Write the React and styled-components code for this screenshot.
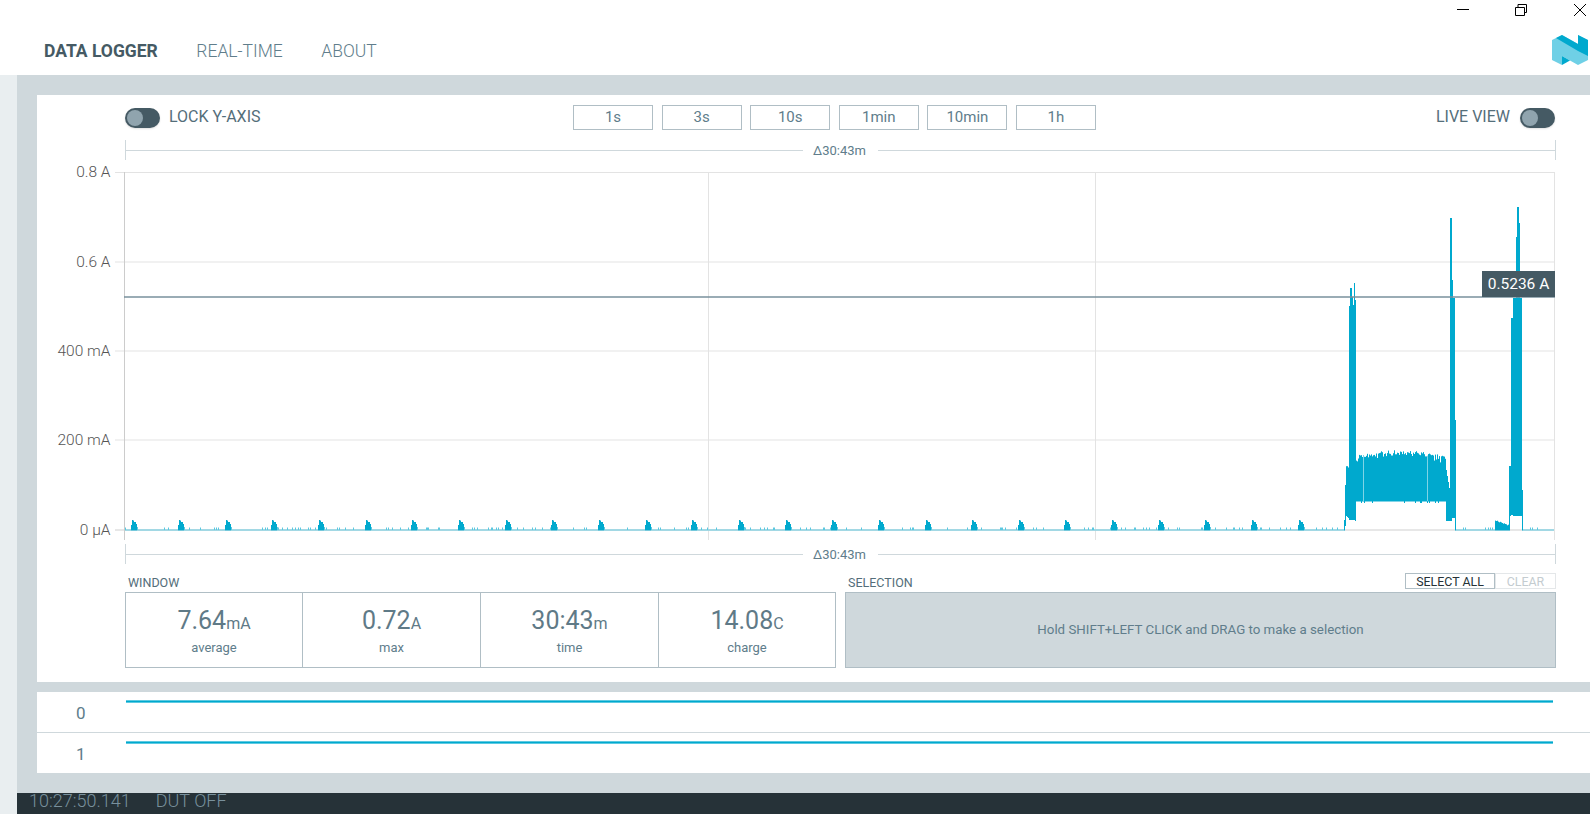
import React from 'react';
import styled, { createGlobalStyle } from 'styled-components';

const Global = createGlobalStyle`
  html, body { margin: 0; padding: 0; background: #fff; }
  body { font-family: Roboto, "Liberation Sans", sans-serif; overflow: hidden; }
  * { box-sizing: border-box; }
`;

const Page = styled.div`
  width: 1590px; height: 814px; display: flex; flex-direction: column; overflow: hidden; background: #fff;
`;
const Header = styled.header`
  height: 75px; flex: none; display: flex; flex-direction: column; background: #fff;
`;
const TitleBar = styled.div`
  height: 25px; display: flex; justify-content: flex-end; align-items: flex-start;
`;
const WinIcon = styled.svg`
  width: 14px; height: 18px; margin-right: ${p => p.$mr}px; display: block;
`;
const NavRow = styled.nav`
  height: 50px; display: flex; align-items: center; padding: 0 2px 0 44px;
`;
const NavItem = styled.span`
  font-size: 17.5px; padding-top: 1px; margin-right: 38.5px; color: ${p => p.$active ? '#455a64' : '#607d8b'}; font-weight: ${p => p.$active ? 700 : 300};
`;
const Logo = styled.svg`
  width: 36px; height: 30px; margin-left: auto; display: block;
`;
const Body = styled.div`
  flex: 1; min-height: 0; display: flex;
`;
const Strip = styled.div`
  width: 17px; flex: none; background: #e9eef0;
`;
const Main = styled.main`
  flex: 1; min-width: 0; display: flex; flex-direction: column; background: #cfd8dc;
`;
const Content = styled.div`
  flex: 1; padding: 20px 0 0 20px; display: flex; flex-direction: column; gap: 10px;
`;
const ChartCard = styled.section`
  height: 587px; background: #fff; padding: 10px 34px 0 88px; display: flex; flex-direction: column;
`;
const Toolbar = styled.div`
  height: 25px; display: grid; grid-template-columns: 448px auto 1fr; align-items: center;
`;
const Toggles = styled.div`
  display: flex; align-items: center; gap: ${p => p.$gap}px; justify-content: ${p => p.$end ? 'flex-end' : 'flex-start'}; padding-right: ${p => p.$end ? 1 : 0}px;
`;
const ToggleLabel = styled.span`
  font-size: 16px; padding-bottom: 2px; color: #546e7a; font-weight: 400;
`;
const Switch = styled.span`
  width: 35px; height: 20px; border-radius: 10px; background: #455a64; display: flex; align-items: center; padding-left: 2px; box-shadow: 0 1px 2px rgba(0,0,0,.12);
`;
const Knob = styled.span`
  width: 16px; height: 16px; border-radius: 50%; background: #90a4ae;
`;
const RangeGroup = styled.div`
  display: flex; gap: 8.6px;
`;
const RangeButton = styled.button`
  width: 80px; height: 25px; padding: 0 0 2px; background: #fff; border: 1px solid #b0bec5; border-radius: 0; color: #607d8b; font: 400 15px Roboto, sans-serif;
`;
const Ruler = styled.div`
  height: 20px; flex: none; margin-top: ${p => p.$mt}px; padding-top: 2px; border-left: 1px solid #cfd8dc; border-right: 1px solid #cfd8dc; display: flex; align-items: center; justify-content: center; position: relative;
  &::before { content: ''; position: absolute; left: 0; right: 0; top: 10px; height: 1px; background: #cfd8dc; }
`;
const RulerLabel = styled.span`
  position: relative; background: #fff; padding: 0 12px 0 10px; font-size: 13px; line-height: 16px; color: #607d8b;
`;
const ChartSvg = styled.svg`
  display: block; flex: none; width: 1518px; height: 384px; margin-left: -88px;
`;
const StatsRow = styled.div`
  display: grid; grid-template-columns: 711px 711px; column-gap: 9px;
`;
const Section = styled.div`
  display: flex; flex-direction: column;
`;
const SectionHead = styled.div`
  height: 28px; display: flex; align-items: flex-end; justify-content: space-between;
`;
const SectionTitle = styled.span`
  font-size: 12.5px; line-height: 14px; padding: 0 0 2px 3px; color: #546e7a;
`;
const HeadButtons = styled.div`
  display: flex; margin-bottom: 3px;
`;
const SmallButton = styled.button`
  height: 16px; width: ${p => p.$w}px; padding: 0; background: #fff; border-radius: 0; font: 400 12.4px Roboto, sans-serif;
  border: 1px solid ${p => p.$off ? '#e4e7e9' : '#b0bec5'}; color: ${p => p.$off ? '#c4ccd0' : '#263238'};
`;
const StatBox = styled.div`
  height: 76px; display: grid; grid-template-columns: 176px 178px 178px 1fr; border: 1px solid #b0bec5;
`;
const StatCell = styled.div`
  display: flex; flex-direction: column; align-items: center; padding-top: 12px; border-left: ${p => p.$first ? 'none' : '1px solid #b0bec5'};
`;
const StatValue = styled.div`
  font-size: 25px; line-height: 32px; color: #5f7a87; font-weight: 400; display: flex; align-items: baseline;
`;
const StatUnit = styled.span`
  font-size: 16px; font-weight: 400;
`;
const StatName = styled.div`
  font-size: 13px; line-height: 16px; color: #607d8b;
`;
const SelectionBox = styled.div`
  height: 76px; background: #cfd8dc; border: 1px solid #b0bec5; padding-bottom: 2px; display: flex; align-items: center; justify-content: center; font-size: 13.3px; color: #607d8b;
`;
const DigitalCard = styled.section`
  height: 81px; background: #fff; display: flex; flex-direction: column;
`;
const DigitalRow = styled.div`
  height: ${p => p.$first ? 40 : 41}px; display: flex; border-top: ${p => p.$first ? 'none' : '1px solid #cfd8dc'};
`;
const ChannelName = styled.span`
  width: 89px; flex: none; padding: 10px 0 0 39px; font-size: 17px; line-height: 22px; color: #607d8b;
`;
const ChannelLine = styled.div`
  width: 1427px; height: 3px; margin-top: 8px; background: linear-gradient(#9fe0ee, #00a9ce 40%, #00a9ce 60%, #9fe0ee);
`;
const StatusBar = styled.footer`
  height: 21px; flex: none; background: #263238; display: flex; gap: 25px; padding-left: 12px; color: #78909c; font-size: 18px; font-weight: 300; line-height: 15px;
`;

function rng(seed) {
  let s = seed;
  return () => { s = (s * 16807) % 2147483647; return s / 2147483647; };
}

function buildColumns() {
  const r = rng(4711);
  const cols = [];
  const blips = Array.from({ length: 26 }, (_, i) => 131 + i * 46.65);
  for (let x = 125; x <= 1553; x++) {
    let top = r() < 0.12 ? 527.5 : 529.5;
    let bot = 530.5;
    const b = blips.find(v => x >= v && x < v + 7);
    if (b !== undefined && x < 1340) {
      const d = Math.floor(x - b);
      top = [525, 520, 520.5, 522, 522, 524, 527][d];
    }
    if (x === 1344) { top = 520; }
    else if (x === 1345) { top = 485; bot = 526; }
    else if (x >= 1346 && x <= 1348) { top = 465 + r() * 3; bot = 516 + (x - 1346); }
    else if (x === 1349) { top = 306; bot = 520; }
    else if (x >= 1350 && x <= 1351) { top = 288; bot = 520; }
    else if (x === 1352) { top = 297; bot = 520; }
    else if (x === 1353) { top = 305; bot = 520; }
    else if (x === 1354) { top = 283; bot = 520; }
    else if (x === 1355) { top = 300; bot = 521; }
    else if (x >= 1356 && x <= 1445) {
      const t = (x - 1356) / 89;
      top = 458.5 - 5 * Math.sin(t * Math.PI) + (r() * r()) * 7 - 2.5 + Math.sin(x * 0.9) * 1;
      bot = 501.5 + (r() < 0.2 ? 1.5 : 0);
    }
    else if (x >= 1446 && x <= 1449) { top = 470 + (x - 1446) * 6; bot = 521; }
    else if (x === 1450 || x === 1451) { top = 218; bot = 521; }
    else if (x === 1452) { top = 280; bot = 518; }
    else if (x >= 1453 && x <= 1454) { top = 298; bot = 518; }
    else if (x === 1455) { top = 420; bot = 530.5; }
    else if (x >= 1495 && x <= 1508) { top = 520 + (x - 1495) * 0.35 + r() * 1.2; bot = 530.5; }
    else if (x >= 1509 && x <= 1510) { top = 466; bot = x === 1509 ? 530.5 : 516; }
    else if (x === 1511 || x === 1512) { top = 318; bot = 515; }
    else if (x >= 1513 && x <= 1515) { top = 298; bot = 516; }
    else if (x === 1516) { top = 237; bot = 516; }
    else if (x === 1517 || x === 1518) { top = 207; bot = 516; }
    else if (x === 1519) { top = 223; bot = 516; }
    else if (x >= 1520 && x <= 1521) { top = 298; bot = 516; }
    else if (x === 1522) { top = 490; bot = 530.5; }
    cols.push({ x, top, bot });
  }
  return cols;
}

const columns = buildColumns();
const toPath = list => list.map(c => `M${c.x + 0.5} ${c.top.toFixed(1)}V${c.bot}`).join('');
const traceD = toPath(columns.filter(c => c.top < 527));
const baselineD = toPath(columns.filter(c => c.top >= 527));
const ticks = [
  ['0.8 A', 172.5], ['0.6 A', 262], ['400 mA', 351], ['200 mA', 440], ['0 μA', 530],
];

const Chart = () => (
  <ChartSvg viewBox="37 160 1518 384">
    {ticks.map(([label, y], i) => (
      <g key={label}>
        <line x1="115" x2="1555" y1={y} y2={y} stroke={i === 4 ? '#cfcfcf' : '#e3e3e3'} strokeWidth="1" />
        <text x="110.5" y={y + 4.5} textAnchor="end" fontFamily="Roboto, sans-serif" fontSize="15.5" fontWeight="300" fill="#555">{label}</text>
      </g>
    ))}
    <line x1="124.5" x2="124.5" y1="172" y2="540" stroke="#ccc" />
    <line x1="708.5" x2="708.5" y1="172" y2="540" stroke="#e3e3e3" />
    <line x1="1095.5" x2="1095.5" y1="172" y2="540" stroke="#e3e3e3" />
    <line x1="1554.5" x2="1554.5" y1="172" y2="540" stroke="#e3e3e3" />
    <path d={baselineD} stroke="#5cc8e0" strokeWidth="1" fill="none" />
    <path d={traceD} stroke="#00a9ce" strokeWidth="1" fill="none" />
    <path d="M1363.5 455V501M1427.5 456V501" stroke="#7fd4e6" strokeWidth="1" fill="none" />
    <line x1="124" x2="1555" y1="297" y2="297" stroke="#78909c" strokeWidth="1.6" />
    <rect x="1482" y="271" width="73" height="26" fill="#455a64" />
    <text x="1518.5" y="289" textAnchor="middle" fontFamily="Roboto, sans-serif" fontSize="15.5" fill="#fff">0.5236 A</text>
  </ChartSvg>
);

const LogoMark = () => (
  <Logo viewBox="0 0 36 30">
    <path d="M0 5 L10 0 L26 9 L26 0 L36 5 L36 25 L26 30 L10 21 L10 30 L0 25Z" fill="#6fd0e6" />
    <path d="M4 3 L10 0 L26 9 L26 16Z" fill="#00a9ce" />
    <path d="M26 0 L36 5 L36 21 L26 16Z" fill="#00a9ce" />
    <path d="M10 21 L18 25.5 L10 30Z" fill="#00a9ce" />
  </Logo>
);

const stats = [
  ['7.64', 'mA', 'average'], ['0.72', 'A', 'max'], ['30:43', 'm', 'time'], ['14.08', 'C', 'charge'],
];

export default function App() {
  return (
    <Page>
      <Global />
      <Header>
        <TitleBar>
          <WinIcon $mr={44} viewBox="0 0 14 18"><path d="M1 9.5H13" stroke="#000" fill="none" /></WinIcon>
          <WinIcon $mr={45} viewBox="0 0 14 18"><path d="M1.5 7.5H10.5V15.5H1.5ZM4 7V4.5H12.5V12.5H11" stroke="#000" fill="none" /></WinIcon>
          <WinIcon $mr={3} viewBox="0 0 14 18"><path d="M1 4L13 16M13 4L1 16" stroke="#000" fill="none" /></WinIcon>
        </TitleBar>
        <NavRow>
          <NavItem $active>DATA LOGGER</NavItem>
          <NavItem>REAL-TIME</NavItem>
          <NavItem>ABOUT</NavItem>
          <LogoMark />
        </NavRow>
      </Header>
      <Body>
        <Strip />
        <Main>
          <Content>
            <ChartCard>
              <Toolbar>
                <Toggles $gap={9}>
                  <Switch><Knob /></Switch>
                  <ToggleLabel>LOCK Y-AXIS</ToggleLabel>
                </Toggles>
                <RangeGroup>
                  {['1s', '3s', '10s', '1min', '10min', '1h'].map(t => <RangeButton key={t}>{t}</RangeButton>)}
                </RangeGroup>
                <Toggles $gap={10} $end>
                  <ToggleLabel>LIVE VIEW</ToggleLabel>
                  <Switch><Knob /></Switch>
                </Toggles>
              </Toolbar>
              <Ruler $mt={10}><RulerLabel>Δ30:43m</RulerLabel></Ruler>
              <Chart />
              <Ruler $mt={0}><RulerLabel>Δ30:43m</RulerLabel></Ruler>
              <StatsRow>
                <Section>
                  <SectionHead><SectionTitle>WINDOW</SectionTitle></SectionHead>
                  <StatBox>
                    {stats.map(([v, u, n], i) => (
                      <StatCell key={n} $first={i === 0}>
                        <StatValue>{v}<StatUnit>{u}</StatUnit></StatValue>
                        <StatName>{n}</StatName>
                      </StatCell>
                    ))}
                  </StatBox>
                </Section>
                <Section>
                  <SectionHead>
                    <SectionTitle>SELECTION</SectionTitle>
                    <HeadButtons>
                      <SmallButton $w={90}>SELECT ALL</SmallButton>
                      <SmallButton $w={61} $off>CLEAR</SmallButton>
                    </HeadButtons>
                  </SectionHead>
                  <SelectionBox>Hold SHIFT+LEFT CLICK and DRAG to make a selection</SelectionBox>
                </Section>
              </StatsRow>
            </ChartCard>
            <DigitalCard>
              <DigitalRow $first><ChannelName>0</ChannelName><ChannelLine /></DigitalRow>
              <DigitalRow><ChannelName>1</ChannelName><ChannelLine /></DigitalRow>
            </DigitalCard>
          </Content>
          <StatusBar><span>10:27:50.141</span><span>DUT OFF</span></StatusBar>
        </Main>
      </Body>
    </Page>
  );
}
